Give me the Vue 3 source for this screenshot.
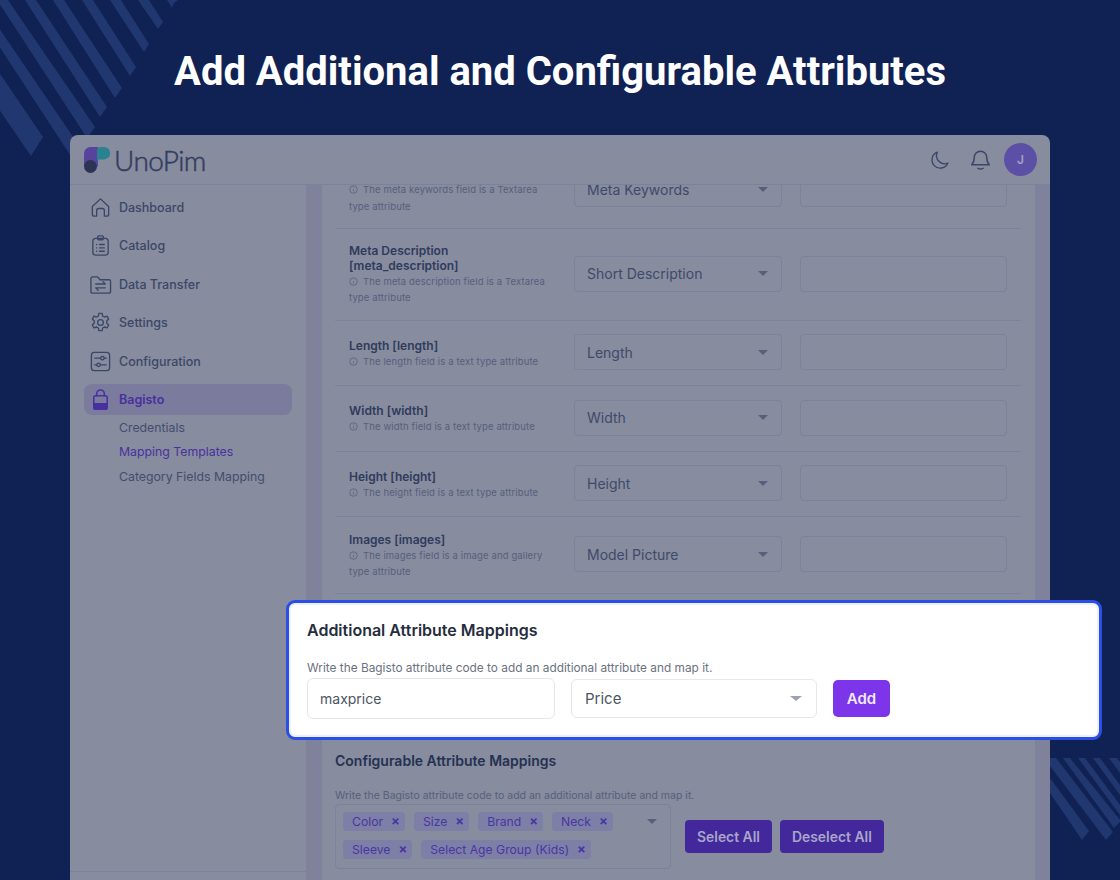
<script setup>
const nav = [
  { label: 'Dashboard', icon: 'home' },
  { label: 'Catalog', icon: 'clip' },
  { label: 'Data Transfer', icon: 'folder' },
  { label: 'Settings', icon: 'gear' },
  { label: 'Configuration', icon: 'sliders' },
]
const rows = [
  { cls: 'r-clip', title: [], help: ['The meta keywords field is a Textarea', 'type attribute'], value: 'Meta Keywords' },
  { cls: 'r-meta', title: ['Meta Description', '[meta_description]'], help: ['The meta description field is a Textarea', 'type attribute'], value: 'Short Description' },
  { cls: 'r-one', title: ['Length [length]'], help: ['The length field is a text type attribute'], value: 'Length' },
  { cls: 'r-one r-tall', title: ['Width [width]'], help: ['The width field is a text type attribute'], value: 'Width' },
  { cls: 'r-one', title: ['Height [height]'], help: ['The height field is a text type attribute'], value: 'Height' },
  { cls: 'r-img', title: ['Images [images]'], help: ['The images field is a image and gallery', 'type attribute'], value: 'Model Picture' },
]
const tagRows = [
  ['Color', 'Size', 'Brand', 'Neck'],
  ['Sleeve', 'Select Age Group (Kids)'],
]
</script>

<template>
  <div class="page">
    <svg class="deco" width="1120" height="880" viewBox="0 0 1120 880" aria-hidden="true">
      <g fill="#20376f">
        <polygon points="-76,0 -50,0 43,137 31,156" />
        <polygon points="-31,0 -20,0 80,147 72,158" />
        <polygon points="-3,0 8,0 95,127 87,138" />
        <polygon points="25,0 36,0 107,107 100,117" />
        <polygon points="53,0 64,0 122,88 115,98" />
        <polygon points="82,0 93,0 136,67 130,76" />
        <polygon points="110,0 121,0 149,44 144,52" />
        <polygon points="138,0 149,0 163,22 158,29" />
        <polygon points="167,0 178,0 174,3 172,8" />
        <polygon points="1050,778 1089,831 1082,840 1050,793" />
        <polygon points="1050,758 1056,758 1113,832 1106,840 1050,766" />
        <polygon points="1063,758 1070,758 1120,820 1120,822 1114,828" />
        <polygon points="1078,758 1085,758 1120,805 1120,815" />
        <polygon points="1093,758 1100,758 1120,785 1120,795" />
        <polygon points="1109,758 1117,758 1120,762 1120,773" />
      </g>
    </svg>

    <h1 class="headline">Add Additional and Configurable Attributes</h1>

    <div class="card">
      <header class="topbar">
        <div class="brand">
          <svg class="logo" width="26" height="26" viewBox="0 0 28 28">
            <path d="M7 0h8v21H0V7a7 7 0 0 1 7-7z" fill="#57439d" />
            <path d="M18 0h3.500a5.900 5.900 0 0 1 0 13.400H14V4a4 4 0 0 1 4-4z" fill="#2a8290" />
            <circle cx="7" cy="21" r="7" fill="#2d3354" />
          </svg>
          <span class="wordmark">UnoPim</span>
        </div>
        <div class="actions">
          <svg class="ico" width="22" height="22" viewBox="0 0 24 24" fill="none" stroke="#3b4766" stroke-width="1.5" stroke-linecap="round" stroke-linejoin="round"><path d="M20.500 15.500A9 9 0 0 1 9 3.500a9 9 0 1 0 11.500 12z" /></svg>
          <svg class="ico" width="25" height="25" viewBox="0 0 24 24" fill="none" stroke="#3b4766" stroke-width="1.400" stroke-linecap="round" stroke-linejoin="round"><path d="M6 10a6 6 0 1 1 12 0c0 4 1 5.500 2.500 7h-17C5 15.500 6 14 6 10z" /><path d="M9.500 20.500c1.500.7 3.500.7 5 0" /></svg>
          <div class="avatar">J</div>
        </div>
      </header>

      <div class="body">
        <aside class="side">
          <nav class="nav">
            <div v-for="item in nav" :key="item.label" class="nav-item">
              <svg width="23" height="23" viewBox="0 0 24 24" fill="none" stroke="#3b4766" stroke-width="1.400" stroke-linecap="round" stroke-linejoin="round">
                <template v-if="item.icon === 'home'">
                  <path d="M3.500 11 12 3l8.500 8v8a2 2 0 0 1-2 2H16v-6a2 2 0 0 0-2-2h-4a2 2 0 0 0-2 2v6H5.500a2 2 0 0 1-2-2z" />
                </template>
                <template v-else-if="item.icon === 'clip'">
                  <rect x="4" y="4.500" width="16" height="17.500" rx="3" />
                  <rect x="9" y="2" width="6" height="4" rx="1" />
                  <path d="M8 11h.1M11 11h5M8 14.500h.1M11 14.500h5M8 18h.1M11 18h5" />
                </template>
                <template v-else-if="item.icon === 'folder'">
                  <path d="M2 6a2 2 0 0 1 2-2h5l2.500 3H21a1.500 1.500 0 0 1 1.500 1.500V19a2 2 0 0 1-2 2H4a2 2 0 0 1-2-2z" />
                  <path d="M7 12h10l-2.500-2.500M17 16H7l2.500 2.500" transform="translate(0 -.5)" />
                </template>
                <template v-else-if="item.icon === 'gear'">
                  <circle cx="12" cy="12" r="3" />
                  <path d="M10.300 2.500h3.400l.6 2.800 1.800 1 2.700-.9 1.700 3-2 2v2.200l2 2-1.700 3-2.700-.9-1.800 1-.6 2.800h-3.400l-.6-2.800-1.800-1-2.700.9-1.700-3 2-2v-2.200l-2-2 1.700-3 2.700.9 1.800-1z" />
                </template>
                <template v-else>
                  <rect x="2.500" y="2.500" width="19" height="19" rx="3" />
                  <path d="M6 8.500h6M16 8.500h2M6 15.500h2M12 15.500h6" />
                  <circle cx="14" cy="8.500" r="1.800" /><circle cx="10" cy="15.500" r="1.800" />
                </template>
              </svg>
              <span>{{ item.label }}</span>
            </div>
            <div class="nav-item active">
              <svg width="23" height="23" viewBox="0 0 24 24" fill="none" stroke="#49309f" stroke-width="1.600" stroke-linecap="round" stroke-linejoin="round">
                <path d="M8 8V6a4 4 0 0 1 8 0v2" />
                <path d="M5 10a2 2 0 0 1 2-2h10a2 2 0 0 1 2 2v10a2 2 0 0 1-2 2H7a2 2 0 0 1-2-2z" />
                <path d="M5 16.500h14V20a2 2 0 0 1-2 2H7a2 2 0 0 1-2-2z" fill="#49309f" />
              </svg>
              <span>Bagisto</span>
            </div>
            <div class="sub first">Credentials</div>
            <div class="sub current">Mapping Templates</div>
            <div class="sub">Category Fields Mapping</div>
          </nav>
          <div class="side-foot"></div>
        </aside>

        <main class="main">
          <section class="panel">
            <div class="rows">
              <div v-for="row in rows" :key="row.value" class="row" :class="row.cls">
                <div class="desc">
                  <div v-for="t in row.title" :key="t" class="r-title">{{ t }}</div>
                  <div v-for="(h, i) in row.help" :key="h" class="r-help">
                    <svg v-if="i === 0" class="info" width="9" height="9" viewBox="0 0 12 12" fill="none" stroke="#565f7c" stroke-width="1"><circle cx="6" cy="6" r="5" /><path d="M6 5.500v3M6 3.300v.7" /></svg>{{ h }}
                  </div>
                </div>
                <div class="select"><span>{{ row.value }}</span><i class="caret"></i></div>
                <div class="field"></div>
              </div>
            </div>

            <div class="under-modal"></div>

            <div class="config">
              <h2>Configurable Attribute Mappings</h2>
              <p>Write the Bagisto attribute code to add an additional attribute and map it.</p>
              <div class="config-line">
                <div class="multi">
                  <div class="tag-rows">
                    <div v-for="(tr, i) in tagRows" :key="i" class="tag-row">
                      <span v-for="t in tr" :key="t" class="tag">{{ t }}<b>×</b></span>
                    </div>
                  </div>
                  <i class="caret multi-caret"></i>
                </div>
                <button class="dim-btn">Select All</button>
                <button class="dim-btn">Deselect All</button>
              </div>
            </div>
          </section>
        </main>
      </div>
    </div>

    <section class="modal">
      <h2>Additional Attribute Mappings</h2>
      <p>Write the Bagisto attribute code to add an additional attribute and map it.</p>
      <div class="modal-line">
        <div class="m-input">maxprice</div>
        <div class="m-select"><span>Price</span><i class="m-caret"></i></div>
        <button class="m-add">Add</button>
      </div>
    </section>
  </div>
</template>

<style>
html, body { margin: 0; background: #102154; }
</style>

<style scoped>
.page {
  position: relative;
  width: 1120px;
  height: 880px;
  overflow: hidden;
  background: #102154;
  font-family: Inter, "Liberation Sans", sans-serif;
}
.deco { position: absolute; left: 0; top: 0; }
.headline {
  position: relative;
  margin: 0;
  padding-top: 48px;
  height: 96px;
  box-sizing: border-box;
  text-align: center;
  font: 700 40px/48px Roboto, sans-serif;
  color: #fff;
}
.card {
  position: absolute;
  left: 70px;
  top: 135px;
  width: 980px;
  height: 745px;
  background: #878c9f;
  border-radius: 8px 8px 0 0;
  display: flex;
  flex-direction: column;
  overflow: hidden;
}
.topbar {
  height: 50px;
  flex: none;
  box-sizing: border-box;
  border-bottom: 1px solid #7b8299;
  display: flex;
  align-items: center;
  justify-content: space-between;
  padding: 0 13px 0 14px;
}
.brand { display: flex; align-items: center; gap: 4px; }
.wordmark {
  font: 300 28px/32px Lato, sans-serif;
  color: #333d5e;
  letter-spacing: -.6px;
  -webkit-text-stroke: .5px #333d5e;
}
.actions { display: flex; align-items: center; }
.actions .ico:nth-child(2) { margin-left: 16.500px; margin-right: 11.500px; }
.avatar {
  width: 33px;
  height: 33px;
  border-radius: 50%;
  background: #5b4fa6;
  color: #a4a3c5;
  font: 600 12px/33px Inter, sans-serif;
  text-align: center;
}
.body { flex: 1; display: flex; min-height: 0; }
.side {
  width: 236px;
  flex: none;
  display: flex;
  flex-direction: column;
  justify-content: space-between;
}
.nav { padding: 3px 14px 0; }
.nav-item {
  height: 38.500px;
  display: flex;
  align-items: center;
  gap: 7px;
  padding-left: 5px;
  font-size: 12.500px;
  font-weight: 500;
  color: #3b4766;
}
.nav-item svg { flex: none; }
.nav-item.active {
  height: 31px;
  margin-top: 3px;
  background: #7a7b9d;
  border-radius: 8px;
  color: #49309f;
  font-weight: 600;
}
.sub {
  height: 24.500px;
  line-height: 24.500px;
  padding-left: 35px;
  font-size: 12.300px;
  color: #434d6d;
}
.sub.first { margin-top: 1px; }
.sub.current { color: #49309f; }
.side-foot { height: 8px; border-top: 1px solid #7b8299; }
.main {
  flex: 1;
  min-width: 0;
  background: #80829c;
  padding: 0 14px 0 15px;
}
.panel {
  height: 100%;
  background: #878c9f;
  border-left: 1px solid #7b8299;
  border-right: 1px solid #7b8299;
  box-sizing: border-box;
  padding: 0 14px 0 13px;
  overflow: hidden;
}
.row {
  display: grid;
  grid-template-columns: 225px 208px 225px;
  align-items: center;
  padding: 0 0 2px 14px;
  box-sizing: border-box;
  border-bottom: 1px solid #7b8299;
}
.row .desc { margin-top: 4px; }
.row .field { margin-left: 18px; width: 207px; }
.r-clip { height: 44px; overflow: hidden; align-items: start; padding-bottom: 0; }
.r-clip .select, .r-clip .field { margin-top: -14px; }
.row.r-clip .desc { margin-top: -3px; }
.r-meta { height: 92px; }
.row.r-meta .desc { margin-top: 2px; }
.r-one { height: 65px; }
.r-tall { height: 66px; }
.r-img { height: 77px; }
.r-title { font-size: 12px; font-weight: 600; line-height: 15px; color: #2f3b5c; }
.r-title + .r-help { margin-top: 1px; }
.r-help { font-size: 9.500px; line-height: 16.500px; color: #565f7c; white-space: nowrap; letter-spacing: .12px; }
.info { margin-right: 5px; vertical-align: -1px; }
.select, .field {
  height: 36px;
  box-sizing: border-box;
  border: 1px solid #7b8299;
  border-radius: 4px;
}
.select {
  display: flex;
  align-items: center;
  justify-content: space-between;
  padding: 0 13px 0 12px;
  font-size: 14px;
  color: #3e4a69;
}
.caret {
  width: 0;
  height: 0;
  border-left: 5px solid transparent;
  border-right: 5px solid transparent;
  border-top: 5px solid #565f7c;
}
.under-modal { height: 157px; }
.config h2 { margin: 0; font-size: 14px; font-weight: 600; line-height: 20px; color: #253151; }
.config p { margin: 18px 0 0; font-size: 10.500px; line-height: 14px; color: #565f7c; }
.config-line { display: flex; align-items: center; margin-top: 1px; }
.multi {
  width: 336px;
  height: 65px;
  box-sizing: border-box;
  border: 1px solid #7b8299;
  border-radius: 4px;
  padding: 7px 13px 0 7px;
  display: flex;
  justify-content: space-between;
  margin-right: 14px;
}
.tag-rows { display: flex; flex-direction: column; gap: 9px; }
.tag-row { display: flex; gap: 9px; }
.tag {
  height: 19px;
  display: flex;
  align-items: center;
  padding: 0 5px 0 9px;
  background: #7d7fa6;
  border-radius: 4px;
  font-size: 12.200px;
  color: #4a36a2;
}
.tag b { margin-left: 8px; font-size: 13px; font-weight: 700; line-height: 1; }
.multi-caret { margin-top: 7px; }
.dim-btn {
  height: 33px;
  border: 0;
  border-radius: 4px;
  background: #42289a;
  color: #a9a6c8;
  font: 600 13.900px Inter, sans-serif;
  padding: 0 12px;
  margin-right: 8px;
}
.modal {
  position: absolute;
  left: 286px;
  top: 600px;
  width: 816px;
  height: 140px;
  box-sizing: border-box;
  background: #fff;
  border: 3px solid #2a4fe6;
  border-radius: 9px;
  box-shadow: inset 0 0 0 2px #eeeef3;
  padding: 17px 18px 0;
}
.modal h2 { margin: 0; font-size: 16px; font-weight: 600; line-height: 20px; color: #252d3d; }
.modal p { margin: 20px 0 0; font-size: 11.850px; line-height: 16px; color: #6b7280; }
.modal-line { display: flex; align-items: center; margin-top: 2px; }
.m-input, .m-select {
  box-sizing: border-box;
  border: 1px solid #e5e7eb;
  border-radius: 6px;
  display: flex;
  align-items: center;
}
.m-input { width: 248px; height: 41px; padding-left: 12px; font-size: 14px; color: #4b5563; }
.m-select {
  width: 246px;
  height: 39px;
  margin-left: 16px;
  padding: 0 14px 0 13px;
  justify-content: space-between;
  font-size: 15px;
  color: #4b5563;
}
.m-caret {
  width: 0;
  height: 0;
  border-left: 6px solid transparent;
  border-right: 6px solid transparent;
  border-top: 5px solid #9ca3af;
}
.m-add {
  width: 57px;
  height: 37px;
  margin-left: 16px;
  border: 0;
  border-radius: 5px;
  background: #7c35e8;
  color: #f1eafd;
  font: 600 15px Inter, sans-serif;
}
</style>
